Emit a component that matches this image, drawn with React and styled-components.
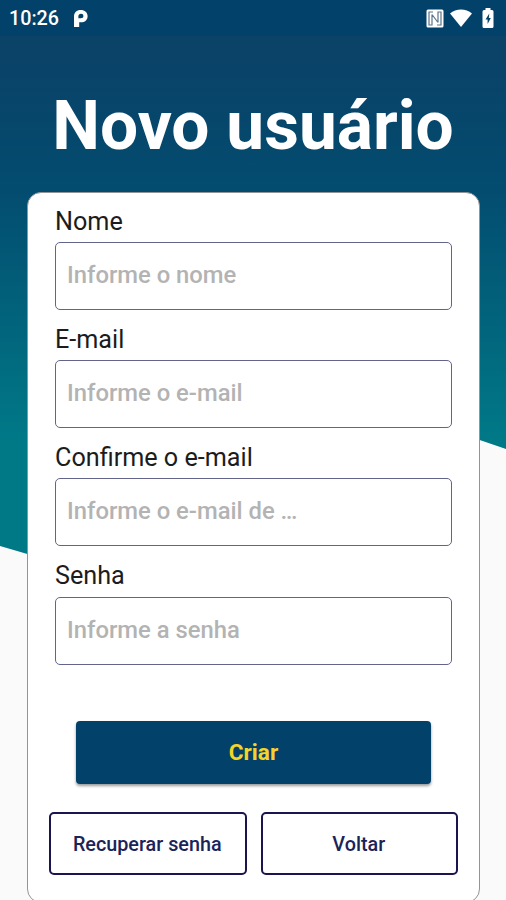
import React from 'react';
import styled, { createGlobalStyle } from 'styled-components';

const colors = {
  navy: '#02416a',
  outline: '#1a1550',
  teal: '#007987',
  yellow: '#f5d327',
  page: '#fafafa',
};

const GlobalStyle = createGlobalStyle`
  * {
    box-sizing: border-box;
  }

  body {
    margin: 0;
    overflow: hidden;
    font-family: Roboto, 'Liberation Sans', sans-serif;
  }
`;

const Screen = styled.div`
  position: relative;
  height: 900px;
  overflow: hidden;
  background: ${colors.page};
`;

const Backdrop = styled.div`
  position: absolute;
  top: 0;
  left: 0;
  width: 100%;
  height: 630px;
  background: linear-gradient(#0a4268 60px, #034c70 190px, ${colors.teal} 440px);
  clip-path: polygon(0 0, 100% 0, 100% 449px, 94.8% 440px, 60% 520px, 40% 620px, 5.4% 554px, 0 546px);
`;

const Content = styled.div`
  position: relative;
`;

const StatusBar = styled.header`
  display: flex;
  align-items: center;
  justify-content: space-between;
  height: 36px;
  padding: 0 12px 0 9px;
  color: #fff;
  background: ${colors.navy};
`;

const StatusGroup = styled.div`
  display: flex;
  align-items: center;
  gap: ${({ gap }) => gap}px;
`;

const Clock = styled.span`
  padding-top: 1px;
  font-size: 19.7px;
  font-weight: 500;
  line-height: 36px;
`;

const Title = styled.h1`
  height: 156px;
  margin: 0;
  padding-top: 50px;
  color: #fff;
  font-size: 67.6px;
  font-weight: 700;
  line-height: 80px;
  text-align: center;
  white-space: nowrap;
`;

const Card = styled.form`
  display: flex;
  flex-direction: column;
  width: 453px;
  height: 711px;
  margin-left: 27px;
  padding: 13px 21px 0;
  background: #fff;
  border: 1px solid #949494;
  border-radius: 14px;
`;

const Field = styled.label`
  display: block;
  height: 118.2px;
  padding: 0 6px;
`;

const LabelText = styled.span`
  display: block;
  height: 36px;
  padding-top: 0.8px;
  color: #1c1c1c;
  font-size: 25.2px;
  line-height: 30px;
`;

const Input = styled.input`
  display: block;
  width: 100%;
  height: 68px;
  padding: 0 10px 2px 11px;
  color: #222;
  font: 500 23.8px Roboto, 'Liberation Sans', sans-serif;
  background: #fff;
  border: 1.5px solid #62648a;
  border-radius: 5px;
  outline: none;

  &::placeholder {
    color: #b3b3b3;
    opacity: 1;
  }
`;

const SubmitButton = styled.button`
  height: 63px;
  margin: 42px 27px 0;
  padding: 0;
  color: ${colors.yellow};
  font: 700 22.6px Roboto, 'Liberation Sans', sans-serif;
  background: ${colors.navy};
  border: 0;
  border-radius: 4px;
  box-shadow: 0 2px 3px rgba(0, 0, 0, 0.4);
`;

const Actions = styled.div`
  display: grid;
  grid-template-columns: 1fr 1fr;
  gap: 14px;
  margin-top: 28px;
`;

const OutlineButton = styled.button`
  height: 63px;
  padding: 2px 1px 0 0;
  color: #1b2459;
  font: 500 19.8px Roboto, 'Liberation Sans', sans-serif;
  background: #fff;
  border: 2px solid ${colors.outline};
  border-radius: 5px;
`;

function PandoraIcon() {
  return (
    <svg width="15" height="19" viewBox="0 0 15 19">
      <path
        d="M1 18V7.5C1 3.5 3.7 1 7.6 1c4.200 0 7 2.400 7 6.200 0 3.700-2.700 6.100-6.800 6.100H6.200V18Z"
        fill="#fff"
      />
      <path
        d="M8 4.8c1.500 0 2.400.9 2.400 2.200S9.500 9.300 7.900 9.300H5.400V7.200C5.400 5.700 6.400 4.800 8 4.800Z"
        fill={colors.navy}
      />
    </svg>
  );
}

function NfcIcon() {
  return (
    <svg width="18" height="19" viewBox="0 0 18 19">
      <rect x=".5" y=".5" width="17" height="18" rx="1.5" fill="#fff" />
      <path
        d="M7 3H3v13h3V5.500M11 16h4V3h-3v10.500M6 5.500l6 8"
        fill="none"
        stroke="#5d7589"
        strokeWidth="1.2"
      />
    </svg>
  );
}

function WifiIcon() {
  return (
    <svg width="22" height="18" viewBox="0 0 22 18">
      <path d="M0 4.5C6-.8 16-.8 22 4.5L11 18Z" fill="#fff" />
    </svg>
  );
}

function BatteryIcon() {
  return (
    <svg width="12" height="20" viewBox="0 0 12 20">
      <path
        d="M3.5 0h5v2H10q1.5 0 1.5 1.5v15Q11.5 20 10 20H2Q.5 20 .5 18.5v-15Q.5 2 2 2h1.5Z"
        fill="#fff"
      />
      <path d="M7.3 5.5 3.5 11.5h2.1V16l3.2-6H6.8Z" fill={colors.navy} />
    </svg>
  );
}

const fields = [
  { name: 'nome', label: 'Nome', placeholder: 'Informe o nome' },
  { name: 'email', label: 'E-mail', placeholder: 'Informe o e-mail' },
  {
    name: 'confirmacao',
    label: 'Confirme o e-mail',
    placeholder: 'Informe o e-mail de …',
  },
  { name: 'senha', label: 'Senha', placeholder: 'Informe a senha', type: 'password' },
];

function App() {
  return (
    <>
      <GlobalStyle />
      <Screen>
        <Backdrop />
        <Content>
          <StatusBar>
            <StatusGroup gap={14}>
              <Clock>10:26</Clock>
              <PandoraIcon />
            </StatusGroup>
            <StatusGroup gap={10}>
              <StatusGroup gap={6}>
                <NfcIcon />
                <WifiIcon />
              </StatusGroup>
              <BatteryIcon />
            </StatusGroup>
          </StatusBar>
          <Title>Novo usuário</Title>
          <Card onSubmit={e => e.preventDefault()}>
            {fields.map(({ name, label, placeholder, type }) => (
              <Field key={name}>
                <LabelText>{label}</LabelText>
                <Input name={name} type={type || 'text'} placeholder={placeholder} />
              </Field>
            ))}
            <SubmitButton type="submit">Criar</SubmitButton>
            <Actions>
              <OutlineButton type="button">Recuperar senha</OutlineButton>
              <OutlineButton type="button">Voltar</OutlineButton>
            </Actions>
          </Card>
        </Content>
      </Screen>
    </>
  );
}

export default App;
